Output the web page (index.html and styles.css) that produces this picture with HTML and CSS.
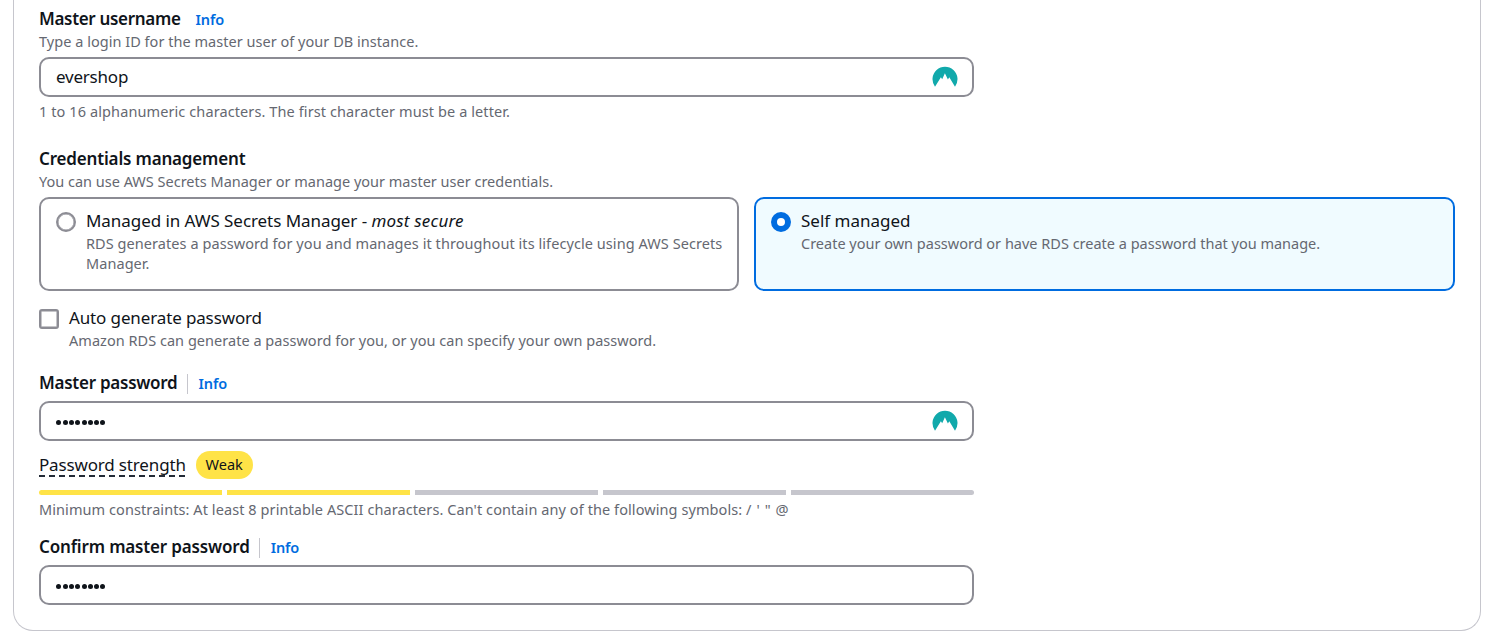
FILE: index.html
```html
<!DOCTYPE html>
<html lang="en">
<head>
<meta charset="utf-8">
<title>Credentials settings</title>
<link rel="stylesheet" href="styles.css">
</head>
<body>
<svg width="0" height="0" class="defs"><symbol id="mountain" viewBox="0 0 26 22"><path d="M3 20.7A12.5 12.5 0 1 1 23 20.7L17.3 11.2L15.9 13.6L12.9 7.2L10.2 13.2L8.9 11.3Z" fill="#11a9ab"/></symbol></svg>
<main class="card">
  <section class="field">
    <div class="label-row"><span class="label t-user">Master username</span><a class="info first">Info</a></div>
    <p class="hint h-login">Type a login ID for the master user of your DB instance.</p>
    <div class="input"><span class="value">evershop</span><svg class="vault"><use href="#mountain"/></svg></div>
    <p class="hint h-chars">1 to 16 alphanumeric characters. The first character must be a letter.</p>
  </section>
  <section class="field credentials">
    <div class="label-row"><span class="label t-cred">Credentials management</span></div>
    <p class="hint h-use">You can use AWS Secrets Manager or manage your master user credentials.</p>
    <div class="tiles">
      <div class="tile">
        <span class="radio"></span>
        <div><div class="option t-managed">Managed in AWS Secrets Manager - <em>most secure</em></div>
        <p class="hint h-rds">RDS generates a password for you and manages it throughout its lifecycle using AWS Secrets<br>Manager.</p></div>
      </div>
      <div class="tile selected">
        <span class="radio"></span>
        <div><div class="option t-self">Self managed</div>
        <p class="hint h-create">Create your own password or have RDS create a password that you manage.</p></div>
      </div>
    </div>
  </section>
  <section class="check-row">
    <span class="checkbox"></span>
    <div><div class="option t-auto">Auto generate password</div>
    <p class="hint h-amazon">Amazon RDS can generate a password for you, or you can specify your own password.</p></div>
  </section>
  <section class="field password">
    <div class="label-row"><span class="label t-pass">Master password</span><a class="info divided">Info</a></div>
    <div class="input"><span class="dots"><i></i><i></i><i></i><i></i><i></i><i></i><i></i><i></i></span><svg class="vault"><use href="#mountain"/></svg></div>
    <div class="strength"><span class="strength-label">Password strength</span><span class="badge">Weak</span></div>
    <div class="meter"><i class="on"></i><i class="on"></i><i></i><i></i><i></i></div>
    <p class="hint h-min">Minimum constraints: At least 8 printable ASCII characters. Can't contain any of the following symbols: <span class="symbols">/ ' " @</span></p>
  </section>
  <section class="field confirm">
    <div class="label-row"><span class="label t-confirm">Confirm master password</span><a class="info divided">Info</a></div>
    <div class="input"><span class="dots"><i></i><i></i><i></i><i></i><i></i><i></i><i></i><i></i></span></div>
  </section>
</main>
</body>
</html>
```
FILE: styles.css
```css
* { box-sizing: border-box; }
body { margin: 0; height: 644px; overflow: hidden; background: #fff; color: #0f141a; font-family: "Noto Sans", "Open Sans", sans-serif; font-size: 17px; line-height: 23px; }
p { margin: 0; }
.defs { display: block; }
.card { margin: 0 15px 0 13px; height: 631px; padding: 7px 25px 0; border: 1px solid #c6c6cd; border-top: 0; border-radius: 0 0 20px 20px; }
.label-row { display: flex; height: 25px; white-space: nowrap; }
.label { font-weight: 650; }
.t-user { letter-spacing: -.32px; }
.t-cred { letter-spacing: -.17px; }
.t-pass { letter-spacing: -.26px; }
.t-confirm { letter-spacing: -.16px; }
.info { color: #006ce0; font-size: 14.5px; font-weight: 600; line-height: 24px; letter-spacing: -.1px; }
.info.first { margin-left: 15px; }
.info.divided { position: relative; margin-left: 9px; padding-left: 12px; }
.info.divided::before { content: ""; position: absolute; left: 0; top: 3px; width: 1px; height: 20px; background: #c6c6cd; }
.hint { height: 20px; color: #656871; font-size: 14.5px; line-height: 18px; white-space: nowrap; }
.h-login, .h-amazon { letter-spacing: .03px; }
.h-chars { letter-spacing: .1px; }
.h-rds { height: 40px; line-height: 20px; margin-top: -1px; letter-spacing: .065px; }
.h-min { letter-spacing: .08px; }
.symbols { letter-spacing: .6px; }
.option { height: 25px; white-space: nowrap; }
.t-managed { letter-spacing: -.06px; }
.t-managed em { letter-spacing: .2px; }
.t-auto { letter-spacing: -.13px; }
.input { display: flex; align-items: center; width: 935px; height: 40px; margin: 5px 0; padding: 0 14px 0 15px; border: 2px solid #8c8c94; border-radius: 10px; background: #fff; }
.value { flex: 1; padding-bottom: 2px; letter-spacing: -.22px; }
.vault { width: 26px; height: 22px; margin-left: auto; }
.credentials { margin-top: 25px; }
.tiles { display: grid; grid-template-columns: 700px 701px; gap: 15px; margin-top: 5px; }
.tile { display: flex; gap: 10px; height: 94px; padding: 10px 15px; border: 2px solid #8c8c94; border-radius: 10px; }
.tile.selected { border-color: #006ce0; background: #f0fbff; }
.radio { flex: none; width: 20px; height: 20px; margin-top: 3px; border: 2px solid #8c8c94; border-radius: 50%; background: #fff; box-shadow: inset 0 0 0 .5px #8c8c94; }
.selected .radio { border: 6px solid #006ce0; box-shadow: none; }
.check-row { display: flex; gap: 10px; margin-top: 15px; }
.checkbox { width: 20px; height: 20px; margin-top: 3px; border: 2px solid #8c8c94; border-radius: 3px; box-shadow: inset 0 0 0 .5px #8c8c94; }
.password { margin-top: 20px; }
.dots { display: flex; gap: 1.3px; padding: 2px 0 0 .4px; }
.dots i { width: 5px; height: 5px; border-radius: 50%; background: #0f141a; }
.strength { display: flex; gap: 10px; height: 28px; margin-top: 10px; }
.strength-label { height: 26px; line-height: 27px; letter-spacing: -.16px; background: repeating-linear-gradient(90deg, #232b37 0 6px, transparent 6px 10px) left bottom / 100% 2px no-repeat; }
.badge { width: 57px; height: 28px; border-radius: 14px; background: #ffe347; font-size: 14.5px; line-height: 27px; text-align: center; }
.meter { display: grid; grid-template-columns: repeat(5, 183px); gap: 5px; height: 5px; margin: 11px 0 5px; }
.meter i { background: #c6c6cd; }
.meter .on { background: #ffe347; }
.meter i:first-child { border-radius: 3px 0 0 3px; }
.meter i:last-child { border-radius: 0 3px 3px 0; }
.confirm { margin-top: 15px; }
```
